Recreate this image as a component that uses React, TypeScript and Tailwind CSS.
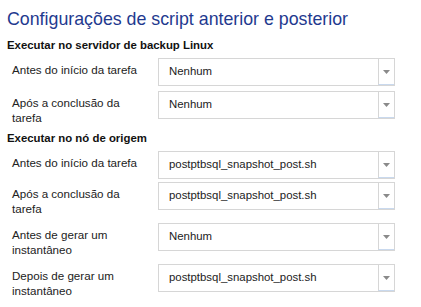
import React from "react";

function Select({ value }: { value: string }) {
  return (
    <div className="flex h-[28px] w-[237px] border border-[#d6d6d6] bg-white">
      <div className="flex flex-1 items-center pl-[10px] text-[11.4px] text-[#222]">{value}</div>
      <div className="flex w-[16px] items-center justify-center border-l border-[#d6d6d6] border-b border-b-[#c9d9ee]">
        <svg width="7" height="4" viewBox="0 0 7 4">
          <path d="M0 0 L7 0 L3.5 4 Z" fill="#8a8a8a" />
        </svg>
      </div>
    </div>
  );
}

function Row({ label, value, mt }: { label: React.ReactNode; value: string; mt: string }) {
  return (
    <div className={`flex items-start ${mt}`}>
      <div className="w-[151px] pl-[5px] pt-[4px] text-[11.6px] leading-[15px] text-[#222]">{label}</div>
      <Select value={value} />
    </div>
  );
}

export default function App() {
  return (
    <div
      className="h-[307px] w-[421px] overflow-hidden bg-white pl-[7px]"
      style={{ fontFamily: '"Liberation Sans", Arial, sans-serif' }}
    >
      <div className="pt-[8px] text-[17.8px] leading-[22px] text-[#1f3a8f]">
        Configurações de script anterior e posterior
      </div>
      <div className="mt-[8px] text-[11.4px] font-bold leading-[15px] text-[#111]">
        Executar no servidor de backup Linux
      </div>
      <Row mt="mt-[5px]" label="Antes do início da tarefa" value="Nenhum" />
      <Row mt="mt-[5px]" label={<>Após a conclusão da<br />tarefa</>} value="Nenhum" />
      <div className="mt-[6px] text-[11.4px] font-bold leading-[15px] text-[#111]">
        Executar no nó de origem
      </div>
      <Row mt="mt-[5px]" label="Antes do início da tarefa" value="postptbsql_snapshot_post.sh" />
      <Row mt="mt-[3px]" label={<>Após a conclusão da<br />tarefa</>} value="postptbsql_snapshot_post.sh" />
      <Row mt="mt-[7px]" label={<>Antes de gerar um<br />instantâneo</>} value="Nenhum" />
      <Row mt="mt-[7px]" label={<>Depois de gerar um<br />instantâneo</>} value="postptbsql_snapshot_post.sh" />
    </div>
  );
}
